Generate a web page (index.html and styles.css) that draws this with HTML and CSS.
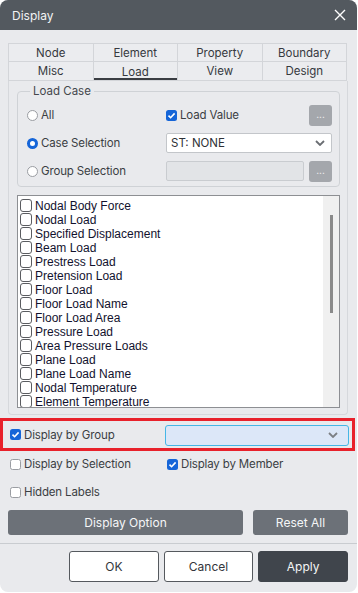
FILE: index.html
```html
<!DOCTYPE html>
<html>
<head>
<meta charset="utf-8">
<link rel="stylesheet" href="styles.css">
</head>
<body>
<div class="dialog">
  <div class="titlebar">
    <span class="title">Display</span>
    <svg class="close" width="12" height="12" viewBox="0 0 12 12"><path d="M1 1L11 11M11 1L1 11" stroke="#fff" stroke-width="1.4" fill="none"/></svg>
  </div>
  <div class="content">
    <div class="tabs">
      <div class="tab">Node</div>
      <div class="tab">Element</div>
      <div class="tab">Property</div>
      <div class="tab">Boundary</div>
      <div class="tab">Misc</div>
      <div class="tab active">Load</div>
      <div class="tab">View</div>
      <div class="tab">Design</div>
    </div>
    <div class="panel">
      <fieldset class="group">
        <legend>Load Case</legend>
        <div class="lc-grid">
          <label class="opt"><span class="radio"></span>All</label>
          <label class="opt"><span class="check on"><svg viewBox="0 0 11 11"><path d="M2.5 5.6L4.6 7.7L8.6 3.4" stroke="#fff" stroke-width="1.6" fill="none"/></svg></span>Load Value</label>
          <button class="dots">...</button>
          <label class="opt"><span class="radio on"></span>Case Selection</label>
          <div class="select span2">ST: NONE<svg class="chev" width="10" height="6" viewBox="0 0 10 6"><path d="M1 1L5 5L9 1" stroke="#6a6d72" stroke-width="1.8" fill="none"/></svg></div>
          <label class="opt"><span class="radio"></span>Group Selection</label>
          <div class="input disabled"></div>
          <button class="dots">...</button>
        </div>
      </fieldset>
      <div class="list">
        <div class="items">
          <div class="item"><span class="box"></span>Nodal Body Force</div>
          <div class="item"><span class="box"></span>Nodal Load</div>
          <div class="item"><span class="box"></span>Specified Displacement</div>
          <div class="item"><span class="box"></span>Beam Load</div>
          <div class="item"><span class="box"></span>Prestress Load</div>
          <div class="item"><span class="box"></span>Pretension Load</div>
          <div class="item"><span class="box"></span>Floor Load</div>
          <div class="item"><span class="box"></span>Floor Load Name</div>
          <div class="item"><span class="box"></span>Floor Load Area</div>
          <div class="item"><span class="box"></span>Pressure Load</div>
          <div class="item"><span class="box"></span>Area Pressure Loads</div>
          <div class="item"><span class="box"></span>Plane Load</div>
          <div class="item"><span class="box"></span>Plane Load Name</div>
          <div class="item"><span class="box"></span>Nodal Temperature</div>
          <div class="item"><span class="box"></span>Element Temperature</div>
        </div>
        <div class="scrollbar"><div class="thumb"></div></div>
      </div>
    </div>
    <div class="hl-row">
      <label class="opt hl-label"><span class="check on"><svg viewBox="0 0 11 11"><path d="M2.5 5.6L4.6 7.7L8.6 3.4" stroke="#fff" stroke-width="1.6" fill="none"/></svg></span>Display by Group</label>
      <div class="select blue"><svg class="chev" width="10" height="6" viewBox="0 0 10 6"><path d="M1 1L5 5L9 1" stroke="#7c7f84" stroke-width="1.8" fill="none"/></svg></div>
    </div>
    <div class="opt-row">
      <label class="opt first"><span class="check"></span>Display by Selection</label>
      <label class="opt"><span class="check on"><svg viewBox="0 0 11 11"><path d="M2.5 5.6L4.6 7.7L8.6 3.4" stroke="#fff" stroke-width="1.6" fill="none"/></svg></span>Display by Member</label>
    </div>
    <div class="opt-row">
      <label class="opt first"><span class="check"></span>Hidden Labels</label>
    </div>
    <div class="btn-row">
      <button class="gbtn wide">Display Option</button>
      <button class="gbtn narrow">Reset All</button>
    </div>
  </div>
  <div class="footer">
    <button class="fbtn">OK</button>
    <button class="fbtn">Cancel</button>
    <button class="fbtn primary">Apply</button>
  </div>
</div>
</body>
</html>
```
FILE: styles.css
```css
* { box-sizing: border-box; }
html, body { margin: 0; padding: 0; background: #ffffff; }
body { font-family: Inter, "Noto Sans", sans-serif; font-size: 11px; color: #3b3e43; }

.dialog {
  width: 357px;
  height: 592px;
  background: #e9eaed;
  border-radius: 8px;
  overflow: hidden;
  display: flex;
  flex-direction: column;
}

.titlebar {
  height: 30px;
  background: #53595f;
  display: flex;
  align-items: center;
  justify-content: space-between;
  padding: 0 11px 0 12px;
  flex: none;
}
.title { color: #f2f3f4; font-size: 12px; }
.close { display: block; }

.content {
  padding: 13px 9px 8px 8px;
  flex: none;
}

.tabs {
  display: grid;
  grid-template-columns: repeat(4, 1fr);
  grid-template-rows: 17px 18px;
  gap: 1px;
  padding: 1px;
  background: #d3d5d9;
  margin-right: 1px;
}
.tab {
  background: #ebecef;
  display: flex;
  align-items: center;
  justify-content: center;
  color: #36393e;
  font-size: 11.5px;
}
.tab.active { box-shadow: inset 0 -2px 0 #3a3d42; padding-top: 2px; }

.panel {
  border: 1px solid #d6d8dc;
  border-top: none;
  border-radius: 0 0 4px 4px;
  padding: 3px 7px 6px 8px;
}

.group {
  margin: 0;
  border: 1px solid #cfd2d6;
  border-radius: 4px;
  padding: 5px 6px 3px 9px;
}
.group legend {
  padding: 0 3px;
  margin-left: 3px;
  line-height: 14px;
  font-size: 11.5px;
  color: #44474c;
}

.lc-grid {
  display: grid;
  grid-template-columns: 134px 138px 23px;
  grid-template-rows: 24px 24px 24px;
  column-gap: 5px;
  row-gap: 4px;
  align-items: center;
}
.span2 { grid-column: 2 / span 2; }

.opt {
  display: flex;
  align-items: center;
  gap: 3px;
  font-size: 11.5px;
  letter-spacing: -0.15px;
  color: #3b3e43;
  white-space: nowrap;
}

.radio {
  width: 11px; height: 11px;
  border-radius: 50%;
  background: #fff;
  border: 1px solid #9a9da2;
  flex: none;
}
.radio.on { border: 3.5px solid #1565d8; }

.check {
  width: 11px; height: 11px;
  border-radius: 2.5px;
  background: #fff;
  border: 1px solid #9a9da2;
  flex: none;
  display: flex;
}
.check.on { background: #1565d8; border: none; }
.check svg { width: 11px; height: 11px; display: block; }

.dots {
  width: 23px; height: 21px;
  border: none;
  border-radius: 3px;
  background: #a4a7ac;
  color: #f4f4f4;
  font-family: Inter, sans-serif;
  font-size: 10px;
  padding: 0 0 3px 0;
  line-height: 1;
}

.select {
  height: 20px;
  background: #fff;
  border: 1px solid #c3c6ca;
  border-radius: 2px;
  display: flex;
  align-items: center;
  justify-content: space-between;
  padding: 0 6px 0 4px;
  font-size: 11.5px;
  color: #2e3136;
}
.chev { display: block; }
.input.disabled {
  height: 20px;
  background: #e2e4e7;
  border: 1px solid #c9ccd0;
  border-radius: 2px;
}

.list {
  margin-top: 8px;
  height: 213px;
  background: #fff;
  border: 1px solid #8d8f93;
  display: flex;
  overflow: hidden;
}
.items { flex: 1; padding-top: 2px; }
.item {
  height: 14px;
  display: flex;
  align-items: center;
  font-family: "Liberation Sans", Arial, sans-serif;
  font-size: 12px;
  color: #12122e;
  padding-left: 2px;
  padding-top: 1px;
  white-space: nowrap;
}
.box {
  width: 12px; height: 13px;
  border: 1px solid #5a5c60;
  border-radius: 3px;
  background: #fff;
  margin-right: 3px;
  flex: none;
}
.scrollbar {
  width: 16px;
  background: #f0f0f0;
  display: flex;
  justify-content: center;
}
.thumb {
  width: 3px;
  height: 98px;
  margin-top: 19px;
  background: #8a8a8a;
  margin-left: 1px;
}

.hl-row {
  margin: 3px -7px 0 -8px;
  height: 33px;
  border: 3px solid #e8212b;
  display: flex;
  align-items: center;
  padding: 0 3px 0 7px;
}
.hl-label { width: 155px; flex: none; }
.select.blue {
  flex: 1;
  height: 21px;
  background: #dce7f8;
  border: 1px solid #46b6e6;
  border-radius: 3px;
  justify-content: flex-end;
  padding-right: 10px;
  margin-top: 1px;
}

.opt-row {
  height: 24px;
  margin-top: 1px;
  display: flex;
  align-items: center;
  padding-left: 2px;
}
.opt-row + .opt-row { margin-top: 4px; }
.opt.first { width: 157px; flex: none; }

.btn-row {
  margin-top: 6px;
  display: flex;
  gap: 10px;
}
.gbtn {
  height: 25px;
  border: none;
  border-radius: 3px;
  background: #6c7178;
  color: #f5f6f7;
  font-family: Inter, sans-serif;
  font-size: 12px;
  padding: 0;
}
.gbtn.wide { width: 235px; }
.gbtn.narrow { width: 95px; }

.footer {
  border-top: 1px solid #c9ccd0;
  padding: 7px 9px 9px 69px;
  display: flex;
  gap: 5px;
  flex: none;
}
.fbtn {
  width: 90px;
  height: 31px;
  background: #fff;
  border: 1px solid #55595e;
  border-radius: 3px;
  font-family: Inter, sans-serif;
  font-size: 12px;
  color: #33363b;
  padding: 0;
}
.fbtn.primary {
  background: #40454c;
  border-color: #40454c;
  color: #f4f5f6;
}
```
